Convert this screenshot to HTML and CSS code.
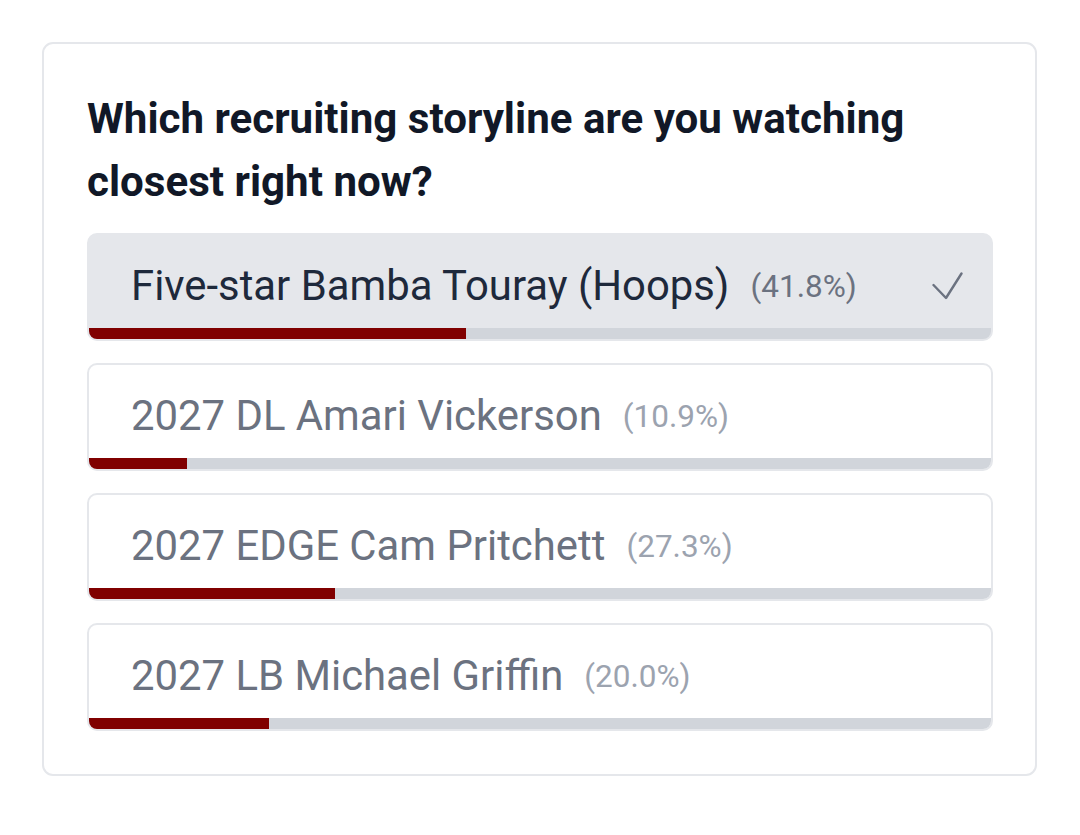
FILE: index.html
```html
<!DOCTYPE html>
<html>
<head>
<meta charset="utf-8">
<link rel="stylesheet" href="styles.css">
</head>
<body>
<div class="card">
  <h2 class="title">Which recruiting storyline are you watching closest right now?</h2>
  <div class="options">
    <div class="option selected">
      <div class="row">
        <span class="label">Five-star Bamba Touray (Hoops)</span>
        <span class="pct">(41.8%)</span>
        <svg class="check" width="31" height="28" viewBox="0 0 31 28"><path d="M1.5 13 L14 26 L29.5 1.5" fill="none" stroke="#6b7280" stroke-width="2.4" stroke-linecap="round" stroke-linejoin="round"/></svg>
      </div>
      <div class="track"><div class="fill" style="width:41.8%"></div></div>
    </div>
    <div class="option">
      <div class="row">
        <span class="label">2027 DL Amari Vickerson</span>
        <span class="pct">(10.9%)</span>
      </div>
      <div class="track"><div class="fill" style="width:10.9%"></div></div>
    </div>
    <div class="option">
      <div class="row">
        <span class="label">2027 EDGE Cam Pritchett</span>
        <span class="pct">(27.3%)</span>
      </div>
      <div class="track"><div class="fill" style="width:27.3%"></div></div>
    </div>
    <div class="option">
      <div class="row">
        <span class="label">2027 LB Michael Griffin</span>
        <span class="pct">(20.0%)</span>
      </div>
      <div class="track"><div class="fill" style="width:20.0%"></div></div>
    </div>
  </div>
</div>
</body>
</html>
```
FILE: styles.css
```css
html, body {
  margin: 0;
  padding: 0;
  background: #ffffff;
}
body {
  padding: 42px 42px 0 42px;
  font-family: Roboto, "Liberation Sans", sans-serif;
}
.card {
  width: 995px;
  box-sizing: border-box;
  border: 2px solid #e5e7eb;
  border-radius: 11px;
  padding: 43px 42px 43px 43px;
  background: #fff;
}
.title {
  margin: 0 0 20px 0;
  font-size: 42.1px;
  line-height: 63px;
  font-weight: 700;
  color: #111827;
}
.options {
  display: flex;
  flex-direction: column;
  gap: 22px;
}
.option {
  border: 2px solid #e5e7eb;
  border-radius: 10px;
  overflow: hidden;
  background: #fff;
  display: flex;
  flex-direction: column;
}
.option.selected {
  background: #e5e7eb;
}
.row {
  display: flex;
  align-items: center;
  padding: 24px 28px 0 42px;
  height: 54px;
}
.label {
  font-size: 41.85px;
  line-height: 54px;
  color: #6b7280;
}
.selected .label {
  color: #1e293b;
}
.pct {
  margin-left: 21px;
  font-size: 31.5px;
  color: #9ca3af;
}
.selected .pct {
  color: #6b7280;
}
.check {
  margin-left: auto;
}
.track {
  margin-top: 15px;
  height: 11px;
  background: #d1d5db;
}
.fill {
  height: 100%;
  background: #800000;
}
```
